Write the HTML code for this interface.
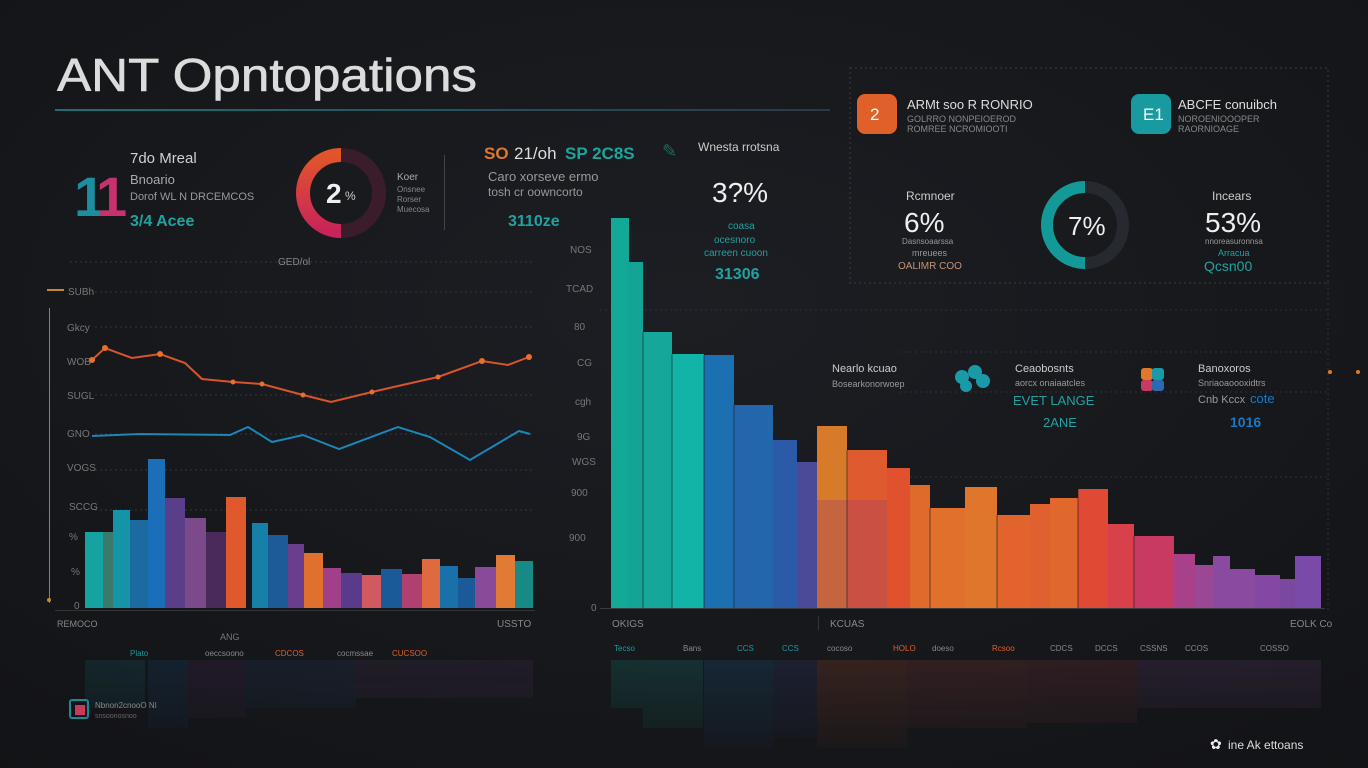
<!DOCTYPE html>
<html><head><meta charset="utf-8"><style>
html,body{margin:0;padding:0;background:#17191d;}
svg{display:block}
text{font-family:"Liberation Sans",sans-serif;}
</style></head><body>
<svg width="1368" height="768" viewBox="0 0 1368 768" xmlns="http://www.w3.org/2000/svg">
<defs>
<radialGradient id="bg" cx="0.5" cy="0.4" r="0.8">
<stop offset="0" stop-color="#1c1e23"/><stop offset="1" stop-color="#121316"/></radialGradient>
<linearGradient id="ul" x1="0" x2="1"><stop offset="0" stop-color="#1d6f78"/><stop offset="1" stop-color="#2a3a44"/></linearGradient>
<linearGradient id="fade" x1="0" y1="0" x2="0" y2="1"><stop offset="0" stop-color="#fff" stop-opacity="0.22"/><stop offset="1" stop-color="#fff" stop-opacity="0"/></linearGradient>
<mask id="rm"><rect x="0" y="630" width="1368" height="138" fill="url(#fade)"/></mask>
<linearGradient id="d1" x1="0" y1="0" x2="0" y2="1"><stop offset="0" stop-color="#e2552a"/><stop offset="1" stop-color="#c8245a"/></linearGradient>
</defs>
<rect width="1368" height="768" fill="url(#bg)"/>

<!-- title -->
<text x="57" y="91" font-size="46" fill="#dcdcdc" textLength="420" lengthAdjust="spacingAndGlyphs" stroke="#dcdcdc" stroke-width="0.6">ANT Opntopations</text>
<rect x="55" y="109" width="775" height="2" fill="url(#ul)"/>

<!-- KPI 1 -->
<text x="74" y="216" font-size="56" font-weight="bold" fill="#1b8fa0">1</text>
<text x="96" y="216" font-size="56" font-weight="bold" fill="#c7316e">1</text>
<text x="130" y="163" font-size="15" fill="#d0d0d0">7do Mreal</text>
<text x="130" y="184" font-size="13" fill="#a8a8a8">Bnoario</text>
<text x="130" y="200" font-size="11" fill="#999">Dorof WL N DRCEMCOS</text>
<text x="130" y="226" font-size="16" font-weight="bold" fill="#1fa3a0">3/4 Acee</text>

<!-- donut 1 -->
<circle cx="341" cy="193" r="38" fill="none" stroke="#3a1c2a" stroke-width="14"/>
<path d="M341 155 A38 38 0 0 0 341 231" fill="none" stroke="url(#d1)" stroke-width="14"/>
<text x="326" y="203" font-size="28" font-weight="bold" fill="#f0f0f0">2</text>
<text x="345" y="200" font-size="12" fill="#ccc">%</text>
<text x="397" y="180" font-size="10" fill="#aaa">Koer</text>
<text x="397" y="192" font-size="8" fill="#888">Onsnee</text>
<text x="397" y="202" font-size="8" fill="#888">Rorser</text>
<text x="397" y="212" font-size="8" fill="#888">Muecosa</text>
<rect x="444" y="155" width="1" height="75" fill="#444"/>

<!-- KPI 3 -->
<text x="484" y="159" font-size="17" font-weight="bold" fill="#e0782a">SO</text>
<text x="514" y="159" font-size="17" fill="#ddd">21/oh</text>
<text x="565" y="159" font-size="17" font-weight="bold" fill="#1ea59a">SP 2C8S</text>
<text x="488" y="181" font-size="13" fill="#999">Caro xorseve ermo</text>
<text x="488" y="196" font-size="12" fill="#999">tosh cr oowncorto</text>
<text x="508" y="226" font-size="16" font-weight="bold" fill="#1fa3a0">3110ze</text>

<text x="662" y="157" font-size="18" fill="#1a6a60">✎</text>
<text x="698" y="151" font-size="12" fill="#ccc">Wnesta rrotsna</text>
<text x="712" y="202" font-size="28" fill="#eee">3?%</text>
<text x="728" y="229" font-size="10" fill="#1fa3a0">coasa</text>
<text x="714" y="243" font-size="10" fill="#1fa3a0">ocesnoro</text>
<text x="704" y="256" font-size="10" fill="#1fa3a0">carreen cuoon</text>
<text x="715" y="279" font-size="16" font-weight="bold" fill="#1fa3a0">31306</text>

<!-- right box -->
<rect x="850" y="68" width="478" height="215" fill="none" stroke="#3a3c42" stroke-dasharray="2 3"/>
<rect x="857" y="94" width="40" height="40" rx="8" fill="#e0602a"/>
<text x="870" y="120" font-size="17" fill="#fff">2</text>
<text x="907" y="109" font-size="13" fill="#ddd">ARMt soo R RONRIO</text>
<text x="907" y="122" font-size="9" fill="#888">GOLRRO NONPEIOEROD</text>
<text x="907" y="132" font-size="9" fill="#888">ROMREE NCROMIOOTI</text>
<rect x="1131" y="94" width="40" height="40" rx="8" fill="#189aa0"/>
<text x="1143" y="120" font-size="17" fill="#fff">E1</text>
<text x="1178" y="109" font-size="13" fill="#ddd">ABCFE conuibch</text>
<text x="1178" y="122" font-size="9" fill="#888">NOROENIOOOPER</text>
<text x="1178" y="132" font-size="9" fill="#888">RAORNIOAGE</text>
<text x="906" y="200" font-size="12" fill="#ccc">Rcmnoer</text>
<text x="904" y="232" font-size="28" fill="#eee">6%</text>
<text x="902" y="244" font-size="8" fill="#999">Dasnsoaarssa</text>
<text x="912" y="256" font-size="9" fill="#999">mreuees</text>
<text x="898" y="269" font-size="10" fill="#c7937a">OALIMR COO</text>
<circle cx="1085" cy="225" r="38" fill="none" stroke="#262a30" stroke-width="12"/>
<path d="M1085 187 A38 38 0 1 0 1085 263" fill="none" stroke="#139a98" stroke-width="12"/>
<text x="1068" y="235" font-size="26" fill="#eee">7%</text>
<text x="1212" y="200" font-size="12" fill="#ccc">Incears</text>
<text x="1205" y="232" font-size="28" fill="#eee">53%</text>
<text x="1205" y="244" font-size="8" fill="#999">nnoreasuronnsa</text>
<text x="1218" y="256" font-size="9" fill="#1fa3a0">Arracua</text>
<text x="1204" y="271" font-size="14" fill="#1fa3a0">Qcsn00</text>

<!-- left line chart grid -->
<g stroke="#34363c" stroke-dasharray="2 3">
<line x1="70" y1="262" x2="535" y2="262"/><line x1="95" y1="292" x2="535" y2="292"/>
<line x1="95" y1="327" x2="535" y2="327"/><line x1="95" y1="395" x2="535" y2="395"/>
<line x1="95" y1="434" x2="535" y2="434"/><line x1="95" y1="470" x2="535" y2="470"/>
<line x1="95" y1="510" x2="535" y2="510"/>
</g>
<text x="278" y="265" font-size="10" fill="#888">GED/ol</text>
<rect x="47" y="289" width="17" height="2" fill="#c78a30"/>
<rect x="49" y="308" width="1" height="295" fill="#b07a28"/>
<circle cx="49" cy="600" r="2" fill="#c78a30"/>
<g font-size="10" fill="#777">
<text x="68" y="295">SUBh</text><text x="67" y="331">Gkcy</text><text x="67" y="365">WOB</text>
<text x="67" y="399">SUGL</text><text x="67" y="437">GNO</text><text x="67" y="471">VOGS</text>
<text x="69" y="510">SCCG</text><text x="69" y="540">%</text><text x="71" y="575">%</text><text x="74" y="609">0</text>
</g>
<g>
<rect x="85" y="532" width="18" height="76" fill="#16a2a0"/>
<rect x="103" y="532" width="10" height="76" fill="#3a7a6a"/>
<rect x="113" y="510" width="17" height="98" fill="#1594a8"/>
<rect x="130" y="520" width="18" height="88" fill="#1b6aa0"/>
<rect x="148" y="459" width="17" height="149" fill="#1a6fb8"/>
<rect x="165" y="498" width="20" height="110" fill="#5a3e8a"/>
<rect x="185" y="518" width="21" height="90" fill="#7a4a8a"/>
<rect x="206" y="532" width="20" height="76" fill="#4a2a5a"/>
<rect x="226" y="497" width="20" height="111" fill="#e0592d"/>
<rect x="252" y="523" width="16" height="85" fill="#1680a8"/>
<rect x="268" y="535" width="20" height="73" fill="#1c5a98"/>
<rect x="288" y="544" width="16" height="64" fill="#6a3e8a"/>
<rect x="304" y="553" width="19" height="55" fill="#e0702d"/>
<rect x="323" y="568" width="18" height="40" fill="#a04088"/>
<rect x="341" y="573" width="21" height="35" fill="#5a3a8a"/>
<rect x="362" y="575" width="19" height="33" fill="#d05a60"/>
<rect x="381" y="569" width="21" height="39" fill="#1a5a98"/>
<rect x="402" y="574" width="20" height="34" fill="#b04070"/>
<rect x="422" y="559" width="18" height="49" fill="#e06a40"/>
<rect x="440" y="566" width="18" height="42" fill="#1a70a8"/>
<rect x="458" y="578" width="17" height="30" fill="#1a5a98"/>
<rect x="475" y="567" width="21" height="41" fill="#8a4a9a"/>
<rect x="496" y="555" width="19" height="53" fill="#e07a35"/>
<rect x="515" y="561" width="18" height="47" fill="#178a88"/>
</g>
<polyline fill="none" stroke="#d9542a" stroke-width="2" points="92,360 105,348 132,358 160,354 185,363 202,379 233,382 262,384 303,395 331,402 372,392 398,386 438,377 482,361 508,365 529,357"/>
<g fill="#e8702a"><circle cx="92" cy="360" r="3"/><circle cx="105" cy="348" r="3"/><circle cx="160" cy="354" r="3"/><circle cx="233" cy="382" r="2.5"/><circle cx="262" cy="384" r="2.5"/><circle cx="303" cy="395" r="2.5"/><circle cx="372" cy="392" r="2.5"/><circle cx="438" cy="377" r="2.5"/><circle cx="482" cy="361" r="3"/><circle cx="529" cy="357" r="3"/></g>
<polyline fill="none" stroke="#1c86b8" stroke-width="2" points="92,436 140,434 230,435 248,427 272,442 303,435 339,449 398,427 430,437 470,460 519,431 530,434"/>
<rect x="55" y="610" width="480" height="1" fill="#333"/>
<text x="57" y="627" font-size="9" fill="#888">REMOCO</text>
<text x="497" y="627" font-size="10" fill="#888">USSTO</text>
<text x="220" y="640" font-size="9" fill="#777">ANG</text>
<g font-size="8" fill="#888"><text x="130" y="656" fill="#1a9aa0">Plato</text><text x="205" y="656">oeccsoono</text><text x="275" y="656" fill="#e0602a">CDCOS</text><text x="337" y="656">cocmssae</text><text x="392" y="656" fill="#e0602a">CUCSOO</text></g>

<!-- big chart axis -->
<g font-size="10" fill="#777">
<text x="570" y="253">NOS</text><text x="566" y="292">TCAD</text><text x="574" y="330">80</text>
<text x="577" y="366">CG</text><text x="575" y="405">cgh</text><text x="577" y="440">9G</text>
<text x="572" y="465">WGS</text><text x="571" y="496">900</text><text x="569" y="541">900</text>
<text x="591" y="611">0</text>
</g>
<g stroke="#2e3036" stroke-dasharray="2 3">
<line x1="600" y1="310" x2="1330" y2="310"/><line x1="900" y1="352" x2="1330" y2="352"/>
<line x1="900" y1="392" x2="1330" y2="392"/><line x1="900" y1="477" x2="1330" y2="477"/>
<line x1="1328" y1="283" x2="1328" y2="610"/>
</g>
<circle cx="1330" cy="372" r="2" fill="#e07a2a"/><circle cx="1358" cy="372" r="2" fill="#e07a2a"/>
<rect x="600" y="608" width="725" height="1" fill="#3a3c42"/>

<!-- big bars -->
<g>
<rect x="611" y="218" width="18" height="390" fill="#14a896"/>
<rect x="628" y="262" width="15" height="346" fill="#13a496"/>
<rect x="643" y="332" width="29" height="276" fill="#15a89a"/>
<rect x="672" y="354" width="32" height="254" fill="#12b4a8"/>
<rect x="704" y="355" width="30" height="253" fill="#1a70b0"/>
<rect x="734" y="405" width="39" height="203" fill="#2466ab"/>
<rect x="773" y="440" width="24" height="168" fill="#2a5aa8"/>
<rect x="797" y="462" width="20" height="146" fill="#4a4a98"/>
<rect x="817" y="426" width="30" height="182" fill="#d77a2a"/>
<rect x="847" y="450" width="40" height="158" fill="#e05a30"/>
<rect x="887" y="468" width="23" height="140" fill="#e0522e"/>
<rect x="910" y="485" width="20" height="123" fill="#e06a2c"/>
<rect x="930" y="508" width="35" height="100" fill="#e0702c"/>
<rect x="965" y="487" width="32" height="121" fill="#e0752c"/>
<rect x="997" y="515" width="33" height="93" fill="#e0642c"/>
<rect x="1030" y="504" width="20" height="104" fill="#e06030"/>
<rect x="1050" y="498" width="28" height="110" fill="#e0682c"/>
<rect x="1078" y="489" width="30" height="119" fill="#e04a34"/>
<rect x="1108" y="524" width="26" height="84" fill="#d8404a"/>
<rect x="1134" y="536" width="40" height="72" fill="#c83a62"/>
<rect x="1174" y="554" width="21" height="54" fill="#a8408a"/>
<rect x="1195" y="565" width="18" height="43" fill="#9a4896"/>
<rect x="1213" y="556" width="17" height="52" fill="#8a4aa0"/>
<rect x="1230" y="569" width="25" height="39" fill="#8a4aa0"/>
<rect x="1255" y="575" width="25" height="33" fill="#8448a4"/>
<rect x="1280" y="579" width="15" height="29" fill="#7a48a0"/>
<rect x="1295" y="556" width="26" height="52" fill="#7a4aa8"/>
</g>
<rect x="817" y="500" width="70" height="108" fill="#a0406a" opacity="0.35"/>
<g stroke="#1a1c20" stroke-width="1" opacity="0.6">
<line x1="643" y1="332" x2="643" y2="608"/><line x1="672" y1="354" x2="672" y2="608"/><line x1="704" y1="355" x2="704" y2="608"/><line x1="734" y1="405" x2="734" y2="608"/><line x1="847" y1="450" x2="847" y2="608"/><line x1="930" y1="508" x2="930" y2="608"/><line x1="997" y1="515" x2="997" y2="608"/><line x1="1078" y1="489" x2="1078" y2="608"/><line x1="1134" y1="536" x2="1134" y2="608"/>
</g>

<!-- mid-right info -->
<text x="832" y="372" font-size="11" fill="#ccc">Nearlo kcuao</text>
<text x="832" y="387" font-size="9" fill="#999">Bosearkonorwoep</text>
<g fill="#1a9aa8"><circle cx="962" cy="377" r="7"/><circle cx="975" cy="372" r="7"/><circle cx="983" cy="381" r="7"/><circle cx="966" cy="386" r="6"/></g>
<text x="1015" y="372" font-size="11" fill="#ccc">Ceaobosnts</text>
<text x="1015" y="386" font-size="9" fill="#999">aorcx onaiaatcles</text>
<text x="1013" y="405" font-size="13" fill="#1fa3a0">EVET LANGE</text>
<text x="1043" y="427" font-size="13" fill="#1fa3a0">2ANE</text>
<rect x="1141" y="368" width="12" height="12" rx="3" fill="#e0782a"/><rect x="1152" y="368" width="12" height="12" rx="3" fill="#1a9aa8"/>
<rect x="1141" y="380" width="12" height="11" rx="3" fill="#c83a62"/><rect x="1152" y="380" width="12" height="11" rx="3" fill="#2a6ab0"/>
<text x="1198" y="372" font-size="11" fill="#ccc">Banoxoros</text>
<text x="1198" y="386" font-size="9" fill="#999">Snriaoaoooxidtrs</text>
<text x="1198" y="403" font-size="11" fill="#999">Cnb Kccx</text>
<text x="1250" y="403" font-size="13" fill="#1a7ac8">cote</text>
<text x="1230" y="427" font-size="14" font-weight="bold" fill="#1a7ac8">1016</text>

<!-- bottom labels -->
<text x="612" y="627" font-size="10" fill="#888">OKIGS</text>
<rect x="818" y="616" width="1" height="14" fill="#333"/>
<text x="830" y="627" font-size="10" fill="#888">KCUAS</text>
<text x="1290" y="627" font-size="10" fill="#888">EOLK Co</text>
<g font-size="8" fill="#888"><text x="614" y="651" fill="#1a9aa0">Tecso</text><text x="683" y="651">Bans</text><text x="737" y="651" fill="#1a9aa0">CCS</text><text x="782" y="651" fill="#1a9aa0">CCS</text><text x="827" y="651">cocoso</text><text x="893" y="651" fill="#e0602a">HOLO</text><text x="932" y="651">doeso</text><text x="992" y="651" fill="#e0602a">Rcsoo</text><text x="1050" y="651">CDCS</text><text x="1095" y="651">DCCS</text><text x="1140" y="651">CSSNS</text><text x="1185" y="651">CCOS</text><text x="1260" y="651">COSSO</text></g>

<!-- reflections -->
<g mask="url(#rm)">
<g transform="translate(0,1268) scale(1,-1)">
<rect x="611" y="560" width="33" height="48" fill="#14a896"/>
<rect x="643" y="540" width="60" height="68" fill="#15a89a"/>
<rect x="704" y="520" width="69" height="88" fill="#1a70b0"/>
<rect x="773" y="530" width="44" height="78" fill="#3a4a98"/>
<rect x="817" y="520" width="90" height="88" fill="#d05a30"/>
<rect x="907" y="540" width="120" height="68" fill="#b84a40"/>
<rect x="1027" y="545" width="110" height="63" fill="#a84048"/>
<rect x="1137" y="560" width="184" height="48" fill="#7a4a8a"/>
<rect x="85" y="560" width="60" height="48" fill="#167a8a"/>
<rect x="148" y="540" width="40" height="68" fill="#1a5a98"/>
<rect x="188" y="550" width="58" height="58" fill="#5a3070"/>
<rect x="246" y="560" width="110" height="48" fill="#2a4a78"/>
<rect x="356" y="570" width="177" height="38" fill="#5a3a6a"/>
</g></g>

<!-- bottom icons -->
<rect x="70" y="700" width="18" height="18" rx="2" fill="none" stroke="#1a8a98" stroke-width="2"/>
<rect x="75" y="705" width="10" height="10" fill="#c83a5a"/>
<text x="95" y="708" font-size="8" fill="#888">Nbnon2cnooO NI</text>
<text x="95" y="718" font-size="7" fill="#666">snsoonosnoo</text>
<text x="1210" y="749" font-size="14" fill="#eee">✿</text>
<text x="1228" y="749" font-size="12" fill="#ddd">ine Ak ettoans</text>
</svg>
</body></html>
